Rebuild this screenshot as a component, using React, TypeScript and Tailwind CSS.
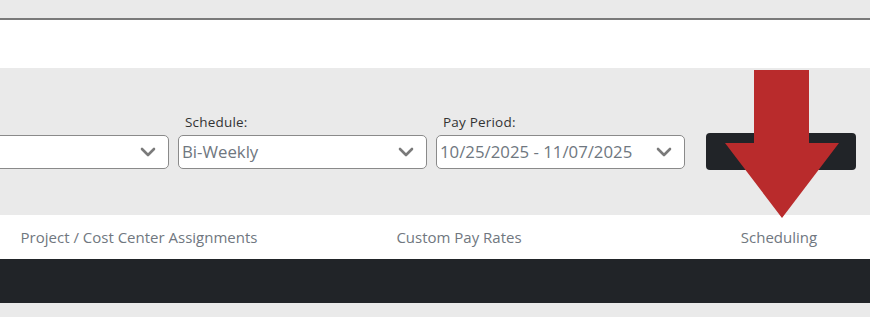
const Chevron = () => (
  <svg width="16" height="10" viewBox="0 0 16 10" className="shrink-0">
    <path d="M2 2 L8 8 L14 2" fill="none" stroke="#7a7a7a" strokeWidth="2.6" strokeLinecap="round" strokeLinejoin="round" />
  </svg>
);

const Select = ({ label, value }: { label?: string; value?: string }) => (
  <div className="flex w-[249px] shrink-0 flex-col">
    <label className="mb-[4px] h-[17px] pl-[7px] text-[13.5px] leading-[17px] tracking-[0.2px] text-[#333]">{label}</label>
    <div className="flex h-[34px] items-center justify-between rounded-[5px] border border-[#8a8a8a] bg-white pl-[3px] pr-[12px]">
      <span className="text-[16.8px] text-[#6f7780]">{value}</span>
      <Chevron />
    </div>
  </div>
);

export default function App() {
  return (
    <div className="relative h-[317px] w-[870px] overflow-hidden bg-[#eaeaea] font-['Open_Sans',sans-serif]">
      <div className="h-[18px]" />
      <div className="h-[2px] bg-[#7a7a7a]" />
      <div className="h-[48px] bg-white" />

      <div className="h-[147px] pt-[46px]">
        <div className="ml-[-80px] flex items-end gap-[9px]">
          <Select />
          <Select label="Schedule:" value="Bi-Weekly" />
          <Select label="Pay Period:" value="10/25/2025 - 11/07/2025" />
          <button className="mb-[-1px] ml-[12px] h-[37px] w-[150px] rounded-[4px] bg-[#212428]" />
        </div>
      </div>

      <div className="ml-[-21px] flex h-[44px] items-center bg-white text-[15px] text-[#707780]">
        <div className="w-[320px] shrink-0 text-center">Project / Cost Center Assignments</div>
        <div className="w-[320px] shrink-0 text-center">Custom Pay Rates</div>
        <div className="w-[320px] shrink-0 text-center">Scheduling</div>
      </div>
      <div className="h-[44px] bg-[#212428]" />

      <svg className="pointer-events-none absolute left-0 top-0" width="870" height="317">
        <polygon points="754,70 809,70 809,143 839,143 782,218 725,143 754,143" fill="#b92b2c" />
      </svg>
    </div>
  );
}
